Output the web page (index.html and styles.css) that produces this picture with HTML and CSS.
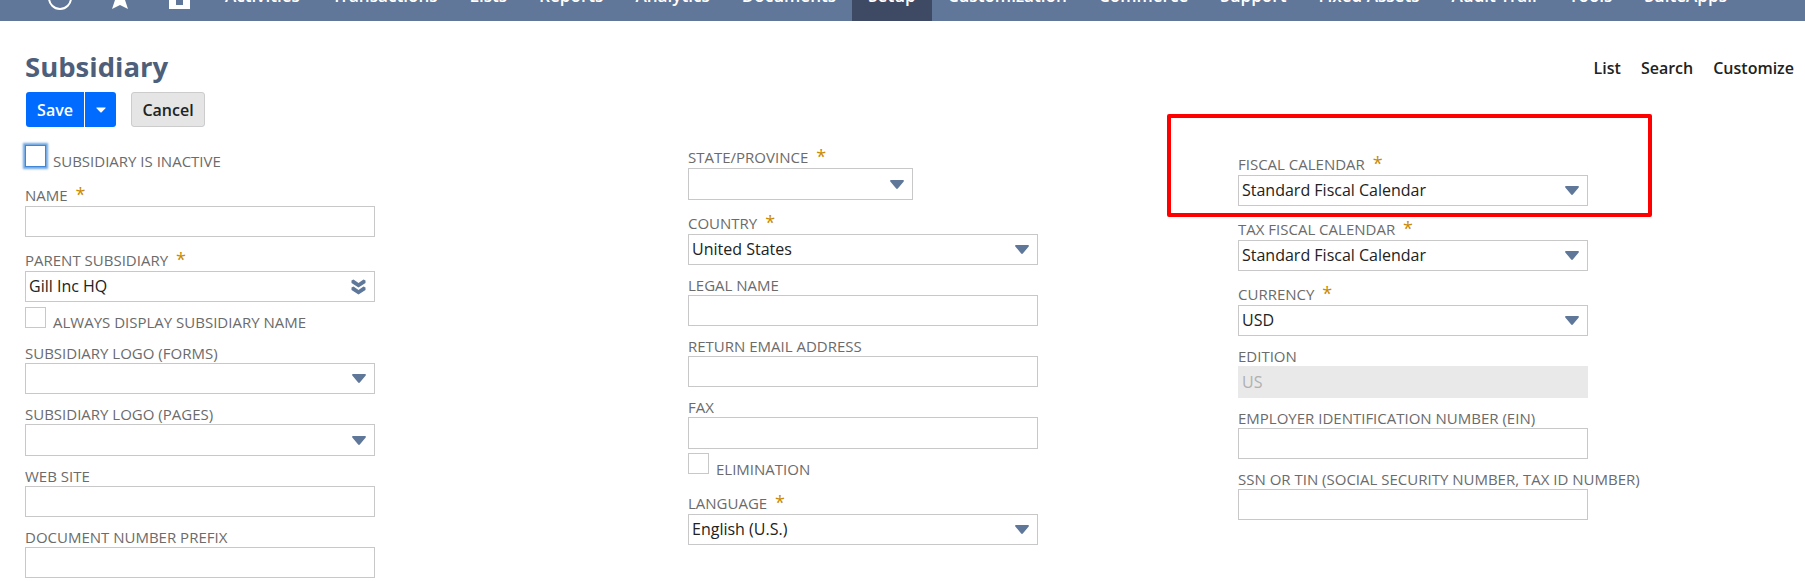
FILE: index.html
```html
<!DOCTYPE html>
<html lang="en">
<head>
<meta charset="utf-8">
<title>Subsidiary</title>
<link rel="stylesheet" href="styles.css">
</head>
<body>
<nav class="nav">
  <div class="nav-icons">
    <svg class="icon-circle" width="24" height="21" viewBox="0 0 24 21"><circle cx="12" cy="-2" r="11" fill="none" stroke="#fff" stroke-width="2"/></svg>
    <svg class="icon-star" width="16" height="21" viewBox="0 0 16 21"><polygon points="0,9 3,0 13,0 16,9 8,5" fill="#fff"/></svg>
    <svg class="icon-home" width="21" height="21" viewBox="0 0 21 21"><path d="M0 0H7V5H14V0H21V9H0Z" fill="#fff"/></svg>
  </div>
  <a class="nav-item"><span class="nav-label">Activities</span></a>
  <a class="nav-item"><span class="nav-label">Transactions</span></a>
  <a class="nav-item"><span class="nav-label">Lists</span></a>
  <a class="nav-item"><span class="nav-label">Reports</span></a>
  <a class="nav-item"><span class="nav-label">Analytics</span></a>
  <a class="nav-item"><span class="nav-label">Documents</span></a>
  <a class="nav-item nav-item-active"><span class="nav-label">Setup</span></a>
  <a class="nav-item"><span class="nav-label">Customization</span></a>
  <a class="nav-item"><span class="nav-label">Commerce</span></a>
  <a class="nav-item"><span class="nav-label">Support</span></a>
  <a class="nav-item"><span class="nav-label">Fixed Assets</span></a>
  <a class="nav-item"><span class="nav-label">Audit Trail</span></a>
  <a class="nav-item"><span class="nav-label">Tools</span></a>
  <a class="nav-item"><span class="nav-label">SuiteApps</span></a>
</nav>

<header class="page-head">
  <h1 class="title">Subsidiary</h1>
  <div class="page-links">
    <a class="page-link">List</a>
    <a class="page-link">Search</a>
    <a class="page-link">Customize</a>
  </div>
</header>

<div class="actions">
  <div class="save-group">
    <button class="btn-save">Save</button>
    <button class="btn-caret" aria-label="More">
      <svg width="10" height="6" viewBox="0 0 11 7" preserveAspectRatio="none"><path d="M1 0.5H10C10.6 0.5 10.8 1.1 10.4 1.6L6.2 6.2C5.8 6.6 5.2 6.6 4.8 6.2L0.6 1.6C0.2 1.1 0.4 0.5 1 0.5Z" fill="#fff"/></svg>
    </button>
  </div>
  <button class="btn-cancel">Cancel</button>
</div>

<main class="form">
  <section class="col col-one">
    <div class="check-row">
      <input class="check check-focus" type="checkbox" aria-label="Subsidiary is inactive">
      <span class="check-label">SUBSIDIARY IS INACTIVE</span>
    </div>
    <div class="field">
      <label class="label label-req">NAME <span class="star">*</span></label>
      <input class="control" type="text">
    </div>
    <div class="field">
      <label class="label label-req">PARENT SUBSIDIARY <span class="star">*</span></label>
      <div class="control select">
        <span>Gill Inc HQ</span>
        <svg class="arrow" width="15" height="16" viewBox="0 0 15 16"><path d="M0.5 1.5L2.5 0.5L7.5 4L12.5 0.5L14.5 1.5L14.5 4L7.5 8.5L0.5 4Z" fill="#5f7799"/><path d="M0.5 8.5L2.5 7.5L7.5 11L12.5 7.5L14.5 8.5L14.5 11L7.5 15.5L0.5 11Z" fill="#5f7799"/></svg>
      </div>
    </div>
    <div class="check-row check-row-compact">
      <input class="check" type="checkbox" aria-label="Always display subsidiary name">
      <span class="check-label">ALWAYS DISPLAY SUBSIDIARY NAME</span>
    </div>
    <div class="field">
      <label class="label">SUBSIDIARY LOGO (FORMS)</label>
      <div class="control select"><span></span><svg class="arrow" width="14" height="9" viewBox="0 0 15 9" preserveAspectRatio="none"><path d="M1 0H14C14.8 0 15.2 .8 14.7 1.4L8.4 8.5C8 9 7 9 6.6 8.5L.3 1.4C-.2 .8 .2 0 1 0Z" fill="#5f7799"/></svg></div>
    </div>
    <div class="field">
      <label class="label">SUBSIDIARY LOGO (PAGES)</label>
      <div class="control control-tall select"><span></span><svg class="arrow" width="14" height="9" viewBox="0 0 15 9" preserveAspectRatio="none"><path d="M1 0H14C14.8 0 15.2 .8 14.7 1.4L8.4 8.5C8 9 7 9 6.6 8.5L.3 1.4C-.2 .8 .2 0 1 0Z" fill="#5f7799"/></svg></div>
    </div>
    <div class="field">
      <label class="label">WEB SITE</label>
      <input class="control" type="text">
    </div>
    <div class="field">
      <label class="label">DOCUMENT NUMBER PREFIX</label>
      <input class="control" type="text">
    </div>
  </section>

  <section class="col col-two">
    <div class="field field-first">
      <label class="label label-req">STATE/PROVINCE <span class="star">*</span></label>
      <div class="control control-tall control-short select"><span></span><svg class="arrow" width="14" height="9" viewBox="0 0 15 9" preserveAspectRatio="none"><path d="M1 0H14C14.8 0 15.2 .8 14.7 1.4L8.4 8.5C8 9 7 9 6.6 8.5L.3 1.4C-.2 .8 .2 0 1 0Z" fill="#5f7799"/></svg></div>
    </div>
    <div class="field">
      <label class="label label-req">COUNTRY <span class="star">*</span></label>
      <div class="control select"><span>United States</span><svg class="arrow" width="14" height="9" viewBox="0 0 15 9" preserveAspectRatio="none"><path d="M1 0H14C14.8 0 15.2 .8 14.7 1.4L8.4 8.5C8 9 7 9 6.6 8.5L.3 1.4C-.2 .8 .2 0 1 0Z" fill="#5f7799"/></svg></div>
    </div>
    <div class="field">
      <label class="label">LEGAL NAME</label>
      <input class="control" type="text">
    </div>
    <div class="field">
      <label class="label">RETURN EMAIL ADDRESS</label>
      <input class="control" type="text">
    </div>
    <div class="field">
      <label class="label">FAX</label>
      <input class="control control-tall" type="text">
    </div>
    <div class="check-row">
      <input class="check" type="checkbox" aria-label="Elimination">
      <span class="check-label">ELIMINATION</span>
    </div>
    <div class="field">
      <label class="label label-req">LANGUAGE <span class="star">*</span></label>
      <div class="control select"><span>English (U.S.)</span><svg class="arrow" width="14" height="9" viewBox="0 0 15 9" preserveAspectRatio="none"><path d="M1 0H14C14.8 0 15.2 .8 14.7 1.4L8.4 8.5C8 9 7 9 6.6 8.5L.3 1.4C-.2 .8 .2 0 1 0Z" fill="#5f7799"/></svg></div>
    </div>
  </section>

  <section class="col col-three">
    <div class="field field-first">
      <label class="label label-req">FISCAL CALENDAR <span class="star">*</span></label>
      <div class="control select"><span>Standard Fiscal Calendar</span><svg class="arrow" width="14" height="9" viewBox="0 0 15 9" preserveAspectRatio="none"><path d="M1 0H14C14.8 0 15.2 .8 14.7 1.4L8.4 8.5C8 9 7 9 6.6 8.5L.3 1.4C-.2 .8 .2 0 1 0Z" fill="#5f7799"/></svg></div>
    </div>
    <div class="field">
      <label class="label label-req">TAX FISCAL CALENDAR <span class="star">*</span></label>
      <div class="control select"><span>Standard Fiscal Calendar</span><svg class="arrow" width="14" height="9" viewBox="0 0 15 9" preserveAspectRatio="none"><path d="M1 0H14C14.8 0 15.2 .8 14.7 1.4L8.4 8.5C8 9 7 9 6.6 8.5L.3 1.4C-.2 .8 .2 0 1 0Z" fill="#5f7799"/></svg></div>
    </div>
    <div class="field">
      <label class="label label-req">CURRENCY <span class="star">*</span></label>
      <div class="control select"><span>USD</span><svg class="arrow" width="14" height="9" viewBox="0 0 15 9" preserveAspectRatio="none"><path d="M1 0H14C14.8 0 15.2 .8 14.7 1.4L8.4 8.5C8 9 7 9 6.6 8.5L.3 1.4C-.2 .8 .2 0 1 0Z" fill="#5f7799"/></svg></div>
    </div>
    <div class="field">
      <label class="label">EDITION</label>
      <input class="control control-tall control-disabled" type="text" value="US" disabled>
    </div>
    <div class="field">
      <label class="label">EMPLOYER IDENTIFICATION NUMBER (EIN)</label>
      <input class="control" type="text">
    </div>
    <div class="field">
      <label class="label">SSN OR TIN (SOCIAL SECURITY NUMBER, TAX ID NUMBER)</label>
      <input class="control" type="text">
    </div>
  </section>
</main>

<div class="annotation"></div>
</body>
</html>
```

FILE: styles.css
```css
* {
  box-sizing: border-box;
}

html,
body {
  height: 581px;
  margin: 0;
  overflow: hidden;
  background: #fff;
  font-family: "Open Sans", "Liberation Sans", sans-serif;
}

.nav {
  display: flex;
  height: 21px;
  overflow: hidden;
  background: #607799;
  padding-left: 48px;
}

.nav-icons {
  display: flex;
  flex: none;
  width: 161px;
}

.icon-circle {
  margin-right: 40px;
}

.icon-star {
  margin-right: 41px;
}

.nav-item {
  flex: none;
  height: 21px;
  padding: 0 16px;
  color: #fff;
  font-size: 17.1px;
  font-weight: 600;
  line-height: 22px;
}

.nav-label {
  display: block;
  margin-top: -15px;
}

.nav-item-active {
  background: #3e4a63;
}

/* Page header */
.page-head {
  display: flex;
  justify-content: space-between;
  align-items: center;
  height: 71px;
  padding: 21px 11px 0 25px;
}

.title {
  margin: 0;
  color: #4d5f7a;
  font-size: 27.5px;
  font-weight: 700;
  line-height: 36px;
}

.page-links {
  display: flex;
  gap: 20px;
  margin-top: 1px;
}

.page-link {
  color: #222;
  font-size: 16px;
  font-weight: 600;
}

/* Action buttons */
.actions {
  display: flex;
  gap: 15px;
  height: 35px;
  padding-left: 26px;
}

.save-group {
  display: flex;
  width: 90px;
  height: 35px;
  border-radius: 3px;
  background: #006cff;
  overflow: hidden;
}

.btn-save,
.btn-caret,
.btn-cancel {
  margin: 0;
  padding: 0;
  font-family: inherit;
  font-size: 16px;
  font-weight: 600;
}

.btn-save {
  width: 59px;
  border: 0;
  border-right: 1px solid #fff;
  background: transparent;
  color: #fff;
}

.btn-caret {
  display: flex;
  flex: 1;
  align-items: center;
  justify-content: center;
  border: 0;
  background: transparent;
}

.btn-cancel {
  width: 74px;
  height: 35px;
  border: 1px solid #ccc;
  border-radius: 3px;
  background: #e5e5e5;
  color: #222;
}

/* Form columns */
.form {
  display: grid;
  grid-template-columns: 663px 550px 1fr;
  margin-top: 17px;
  padding-left: 25px;
}

.col {
  width: 350px;
}

.col-one {
  padding-top: 1px;
}

.col-three {
  padding-top: 7px;
}

.field {
  margin-top: 10px;
}

.field-first {
  margin-top: 0;
}

.label {
  display: block;
  height: 20px;
  color: #6b6b6b;
  font-size: 15px;
  line-height: 20px;
  white-space: nowrap;
}

.label-req {
  height: 24px;
  padding-top: 3px;
}

.star {
  margin-left: 4px;
  color: #c98a00;
  font-size: 18px;
  line-height: 18px;
}

.control {
  display: block;
  width: 350px;
  height: 31px;
  margin: 0;
  padding: 0 3px;
  border: 1px solid #c8c8c8;
  background: #fff;
  color: #222;
  font-family: inherit;
  font-size: 16px;
}

.control-tall {
  height: 32px;
}

.control-short {
  width: 225px;
}

.control-disabled {
  border-color: #e9e9e9;
  background: #e9e9e9;
  color: #b0b0b0;
}

.select {
  display: flex;
  align-items: center;
  justify-content: space-between;
  padding-right: 8px;
}

.select > span {
  position: relative;
  top: -1px;
}

.arrow {
  flex: none;
}

/* Checkbox rows */
.check-row {
  display: flex;
  gap: 7px;
  height: 27px;
  margin-top: 4px;
}

.col-one > .check-row:first-child {
  margin-top: 0;
}

.check-row-compact {
  height: 26px;
  margin-top: 5px;
}

.check {
  flex: none;
  appearance: none;
  width: 21px;
  height: 21px;
  margin: 0;
  border: 1px solid #c8c8c8;
  background: #fff;
}

.check-focus {
  height: 22px;
  border: 1px solid #3f86d6;
  box-shadow: 0 0 2px 2px rgba(74, 144, 217, 0.8);
}

.check-label {
  padding-top: 6px;
  color: #6b6b6b;
  font-size: 15px;
  line-height: 20px;
  white-space: nowrap;
}

.check-row-compact .check-label {
  padding-top: 5px;
}

/* Red annotation drawn over the screenshot */
.annotation {
  position: absolute;
  left: 1167px;
  top: 114px;
  width: 485px;
  height: 103px;
  border: 4px solid #f00;
  border-radius: 2px;
}
```
